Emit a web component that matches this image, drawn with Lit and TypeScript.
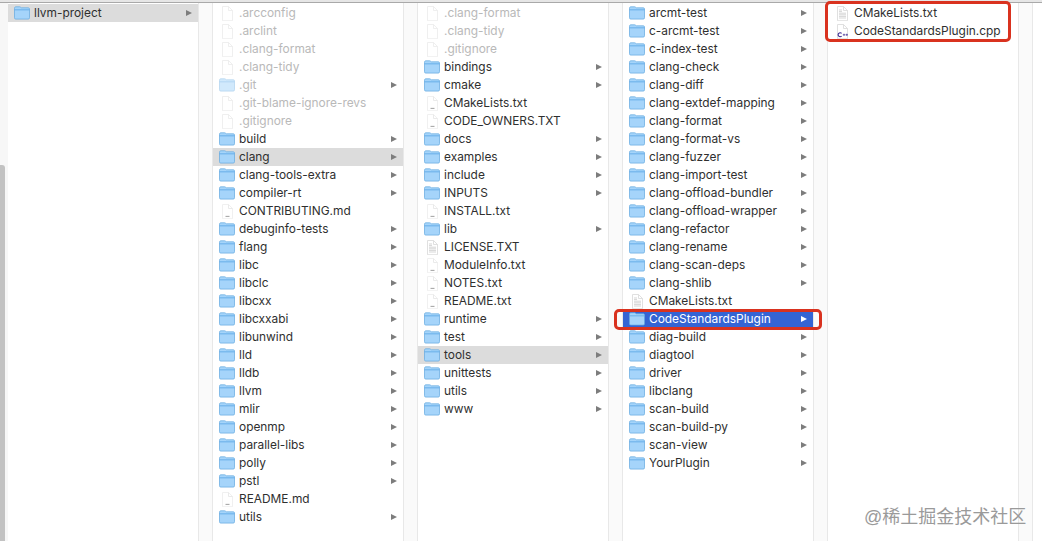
import { LitElement, html, css, svg } from "lit";
import { customElement } from "lit/decorators.js";

type Kind = "folder" | "file" | "txt" | "doc" | "cpp";
type Item = { name: string; kind: Kind; dim?: boolean; state?: "open" | "active" };

const d = (name: string, state?: "open" | "active"): Item => ({ name, kind: "folder", state });
const f = (name: string, kind: Kind = "txt"): Item => ({ name, kind });
const hidden = (name: string): Item => ({ name, kind: "file", dim: true });

const columns: Item[][] = [
  [d("llvm-project", "open")],
  [
    hidden(".arcconfig"), hidden(".arclint"), hidden(".clang-format"), hidden(".clang-tidy"),
    { name: ".git", kind: "folder", dim: true },
    hidden(".git-blame-ignore-revs"), hidden(".gitignore"),
    d("build"), d("clang", "open"), d("clang-tools-extra"), d("compiler-rt"),
    f("CONTRIBUTING.md"), d("debuginfo-tests"), d("flang"), d("libc"), d("libclc"), d("libcxx"),
    d("libcxxabi"), d("libunwind"), d("lld"), d("lldb"), d("llvm"), d("mlir"), d("openmp"),
    d("parallel-libs"), d("polly"), d("pstl"), f("README.md"), d("utils"),
  ],
  [
    hidden(".clang-format"), hidden(".clang-tidy"), hidden(".gitignore"),
    d("bindings"), d("cmake"), f("CMakeLists.txt"), f("CODE_OWNERS.TXT"), d("docs"), d("examples"),
    d("include"), d("INPUTS"), f("INSTALL.txt"), d("lib"), f("LICENSE.TXT", "doc"), f("ModuleInfo.txt"),
    f("NOTES.txt"), f("README.txt"), d("runtime"), d("test"), d("tools", "open"), d("unittests"),
    d("utils"), d("www"),
  ],
  [
    d("arcmt-test"), d("c-arcmt-test"), d("c-index-test"), d("clang-check"), d("clang-diff"),
    d("clang-extdef-mapping"), d("clang-format"), d("clang-format-vs"), d("clang-fuzzer"),
    d("clang-import-test"), d("clang-offload-bundler"), d("clang-offload-wrapper"),
    d("clang-refactor"), d("clang-rename"), d("clang-scan-deps"), d("clang-shlib"),
    f("CMakeLists.txt", "doc"), d("CodeStandardsPlugin", "active"), d("diag-build"), d("diagtool"),
    d("driver"), d("libclang"), d("scan-build"), d("scan-build-py"), d("scan-view"),
    d("YourPlugin"),
  ],
  [f("CMakeLists.txt", "doc"), f("CodeStandardsPlugin.cpp", "cpp")],
];

const folderIcon = svg`<svg class="icon" viewBox="0 0 16 14" width="16" height="14">
  <path d="M.5 2.2C.5 1.3 1.1.8 2 .8h3.6c.7 0 1 .6 1.5 1h7.2c.8 0 1.2.5 1.2 1.2v8.8c0 .8-.5 1.3-1.2 1.3H1.7c-.7 0-1.2-.5-1.2-1.3z" fill="#a5d4fa"/>
  <path d="M.5 3.4h15v.9H.5z" fill="#5fa9e6"/>
  <path d="M.5 2.2C.5 1.3 1.1.8 2 .8h3.6c.7 0 1 .6 1.5 1h7.2c.8 0 1.2.5 1.2 1.2v8.8c0 .8-.5 1.3-1.2 1.3H1.7c-.7 0-1.2-.5-1.2-1.3z" fill="none" stroke="#62a8e0" stroke-width=".7"/>
</svg>`;

const pageOutline = svg`<path d="M2.5.5h6l4 4v10.2h-10z" fill="#fff" stroke="#d8d8d8" stroke-width=".8"/><path d="M8.5.5v4h4" fill="none" stroke="#d8d8d8" stroke-width=".8"/>`;

const fileIcon = svg`<svg class="icon" viewBox="0 0 15 15" width="15" height="15">${pageOutline}</svg>`;

const txtIcon = svg`<svg class="icon" viewBox="0 0 15 15" width="15" height="15">
  <path d="M2.5.5h6l4 4v10.2h-10z" fill="#fff" stroke="#ececec" stroke-width=".8"/>
  <path d="M8.5.5v4h4" fill="none" stroke="#e4e4e4" stroke-width=".8"/>
  <path d="M5.5 12.4h4" stroke="#a8a8a8" stroke-width="1.1"/>
</svg>`;

const docIcon = svg`<svg class="icon" viewBox="0 0 15 15" width="15" height="15">${pageOutline}
  <path d="M4 4h3M4 5.6h3M4 7.2h7M4 8.8h7M4 10.4h7M4 12h7" stroke="#c4c4c4" stroke-width=".7"/>
</svg>`;

const cppIcon = svg`<svg class="icon" viewBox="0 0 15 15" width="15" height="15">${pageOutline}
  <path d="M6.6 9.4a2 2 0 1 0 0 2.7" fill="none" stroke="#3d2a92" stroke-width="1.1"/>
  <path d="M7.8 10.8h2.4M9 9.7v2.2M10.6 10.8H13M11.8 9.7v2.2" stroke="#3d2a92" stroke-width=".7"/>
</svg>`;

const icons: Record<Kind, unknown> = { folder: folderIcon, file: fileIcon, txt: txtIcon, doc: docIcon, cpp: cppIcon };

@customElement("app-root")
export class AppRoot extends LitElement {
  static styles = css`
    :host {
      display: block;
      width: 1042px;
      height: 541px;
      position: relative;
      overflow: hidden;
      background: #fff;
      font-family: Inter, "Liberation Sans", Arial, sans-serif;
      font-size: 11.9px;
      color: #2f2f2f;
    }
    .topbar {
      height: 3px;
      background: #e6e6e6;
      border-bottom: 1px solid #a9a9a9;
      box-sizing: border-box;
    }
    .browser {
      display: flex;
      height: 538px;
    }
    .rail {
      width: 8px;
      flex: none;
      background: #f7f7f7;
      display: flex;
      flex-direction: column;
      justify-content: flex-end;
    }
    .thumb {
      width: 5px;
      height: 376px;
      background: #c2c2c2;
      border-radius: 0 3px 0 0;
    }
    .col {
      width: 190px;
      flex: none;
      padding-top: 1px;
      box-sizing: border-box;
      background: #fff;
    }
    .gutter {
      width: 15px;
      flex: none;
      box-sizing: border-box;
      background: #fafafa;
      border-left: 1px solid #e8e8e8;
      border-right: 1px solid #e8e8e8;
    }
    .row {
      height: 18px;
      display: flex;
      align-items: center;
      box-sizing: border-box;
      padding-left: 6px;
      padding-right: 6px;
      white-space: nowrap;
    }
    .row.dim { color: #b9b9b9; }
    .row.dim .icon { opacity: 0.5; }
    .row.open { background: #dcdcdc; }
    .row.active { background: #3464d4; color: #fff; }
    .slot {
      width: 16px;
      display: flex;
      justify-content: center;
      flex: none;
      margin-right: 4px;
    }
    .name {
      flex: 1;
      padding-bottom: 2px;
    }
    .arrow {
      width: 0;
      height: 0;
      border-left: 6px solid #7d7d7d;
      border-top: 3.5px solid transparent;
      border-bottom: 3.5px solid transparent;
    }
    .row.active .arrow { border-left-color: #fff; }
    .mark {
      position: absolute;
      border: 3px solid #d9321f;
      border-radius: 5px;
      box-sizing: border-box;
    }
    .mark.one { left: 825px; top: 1px; width: 186px; height: 41px; }
    .mark.two { left: 614px; top: 309px; width: 208px; height: 21px; }
    .watermark {
      position: absolute;
      left: 864px;
      top: 502px;
      font-size: 18px;
      color: #9a9a9a;
      font-family: "Liberation Sans", "Noto Sans CJK SC", sans-serif;
      white-space: nowrap;
    }
  `;

  private renderRow(item: Item) {
    const cls = ["row", item.dim ? "dim" : "", item.state ?? ""].join(" ");
    const hasArrow = item.kind === "folder";
    return html`<div class=${cls}>
      <span class="slot">${icons[item.kind]}</span>
      <span class="name">${item.name}</span>
      ${hasArrow ? html`<span class="arrow"></span>` : null}
    </div>`;
  }

  render() {
    return html`
      <div class="topbar"></div>
      <div class="browser">
        <div class="rail"><div class="thumb"></div></div>
        ${columns.map(
          (col) => html`
            <div class="col">${col.map((item) => this.renderRow(item))}</div>
            <div class="gutter"></div>
          `
        )}
      </div>
      <div class="mark one"></div>
      <div class="mark two"></div>
      <div class="watermark">@稀土掘金技术社区</div>
    `;
  }
}
